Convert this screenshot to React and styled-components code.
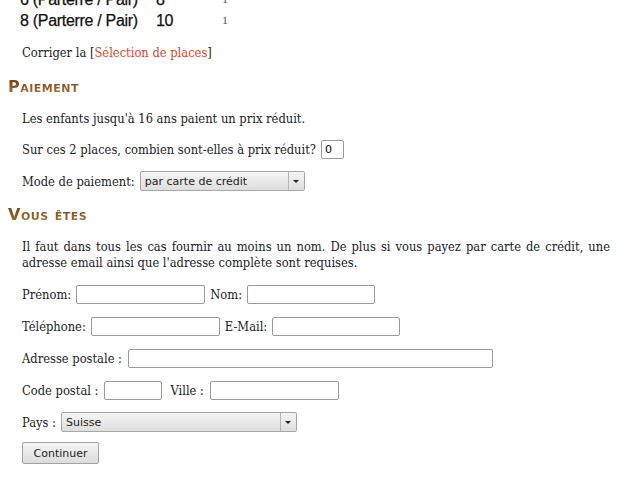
import React from 'react';
import styled, { createGlobalStyle } from 'styled-components';

const Global = createGlobalStyle`
  html, body {
    margin: 0;
    padding: 0;
    background: #fff;
  }
  body {
    font-family: "DejaVu Serif", serif;
    font-stretch: condensed;
    font-size: 12.8px;
    color: #222;
  }
`;

const Page = styled.div`
  width: 620px;
  height: 480px;
  overflow: hidden;
  position: relative;
`;

const Content = styled.div`
  margin-top: -11px;
  padding: 0 8px;
`;

const Seats = styled.table`
  border-collapse: collapse;
  margin-left: 12px;
  td {
    padding: 0;
    height: 21px;
    font-family: "Liberation Sans", Arial, sans-serif;
    font-stretch: normal;
    font-size: 16px;
    letter-spacing: -0.3px;
    color: #111;
    -webkit-text-stroke: 0.25px #111;
  }
  td.num { padding-left: 18px; width: 65px; }
  td.qty {
    font-family: "DejaVu Serif", serif;
    font-size: 10px;
    letter-spacing: 0;
    color: #555;
    -webkit-text-stroke: 0;
    padding-left: 1px;
  }
`;

const Para = styled.p`
  margin: ${p => p.$gap || '0'} 0 0 14px;
  line-height: 16px;
  text-align: ${p => (p.$justify ? 'justify' : 'left')};
  padding-right: ${p => (p.$justify ? '2px' : '0')};
`;

const Link = styled.a`
  color: #d2492a;
  text-decoration: none;
`;

const Heading = styled.h2`
  margin: ${p => p.$gap} 0 0 0;
  font-family: "DejaVu Sans", sans-serif;
  font-stretch: normal;
  font-variant: small-caps;
  font-size: 16px;
  font-weight: bold;
  line-height: 20px;
  letter-spacing: 0.5px;
  color: #8a4a14;
  background: linear-gradient(#6e3a0c, #b27a3e);
  -webkit-background-clip: text;
  background-clip: text;
  -webkit-text-fill-color: transparent;
`;

const Row = styled.div`
  display: flex;
  align-items: center;
  gap: ${p => p.$gap || '5px'};
  margin: ${p => p.$top || '12px'} 0 0 14px;
  height: 20px;
`;

const Label = styled.label`
  white-space: nowrap;
  margin-left: ${p => p.$offset || '0'};
`;

const Field = styled.input`
  box-sizing: border-box;
  width: ${p => p.$w}px;
  height: 19px;
  border: 1px solid #9a9a9a;
  border-radius: 2px;
  padding: 0 3px;
  font-family: "DejaVu Sans", sans-serif;
  font-size: 11px;
  background: #fff;
  outline: none;
`;

const SelectBox = styled.div`
  box-sizing: border-box;
  width: ${p => p.$w}px;
  height: 20px;
  border: 1px solid #a6a6a6;
  border-radius: 2px;
  background: linear-gradient(#f4f4f4, #dedede);
  display: flex;
  align-items: stretch;
  font-family: "DejaVu Sans", sans-serif;
  font-stretch: normal;
  font-size: 11px;
  color: #222;
`;

const SelectText = styled.span`
  flex: 1;
  padding-left: 4px;
  display: flex;
  align-items: center;
`;

const Arrow = styled.span`
  width: 15px;
  border-left: 1px solid #b4b4b4;
  display: flex;
  align-items: center;
  justify-content: center;
  &::after {
    content: '';
    border-left: 3px solid transparent;
    border-right: 3px solid transparent;
    border-top: 3px solid #222;
  }
`;

const Button = styled.button`
  box-sizing: border-box;
  margin: 10px 0 0 14px;
  width: 77px;
  height: 22px;
  border: 1px solid #a2a2a2;
  border-radius: 2px;
  background: linear-gradient(#f6f6f6, #dcdcdc);
  font-family: "DejaVu Sans", sans-serif;
  font-size: 11px;
  color: #222;
  padding: 0;
`;

const Select = ({ w, value }) => (
  <SelectBox $w={w}>
    <SelectText>{value}</SelectText>
    <Arrow />
  </SelectBox>
);

export default function App() {
  return (
    <Page>
      <Global />
      <Content>
        <Seats>
          <tbody>
            <tr><td>6 (Parterre / Pair)</td><td className="num">8</td><td className="qty">1</td></tr>
            <tr><td>8 (Parterre / Pair)</td><td className="num">10</td><td className="qty">1</td></tr>
          </tbody>
        </Seats>

        <Para $gap="14px">Corriger la [<Link href="#">Sélection de places</Link>]</Para>

        <Heading $gap="16px">Paiement</Heading>
        <Para $gap="14px">Les enfants jusqu'à 16 ans paient un prix réduit.</Para>
        <Row $top="12px">
          <Label>Sur ces 2 places, combien sont-elles à prix réduit?</Label>
          <Field $w={23} defaultValue="0" />
        </Row>
        <Row $top="12px">
          <Label>Mode de paiement:</Label>
          <Select w={165} value="par carte de crédit" />
        </Row>

        <Heading $gap="14px">Vous êtes</Heading>
        <Para $gap="14px" $justify>
          Il faut dans tous les cas fournir au moins un nom. De plus si vous payez par carte de crédit, une adresse email ainsi que l'adresse complète sont requises.
        </Para>

        <Row $top="13px">
          <Label>Prénom:</Label>
          <Field $w={129} />
          <Label>Nom:</Label>
          <Field $w={128} />
        </Row>
        <Row>
          <Label>Téléphone:</Label>
          <Field $w={129} />
          <Label>E-Mail:</Label>
          <Field $w={128} />
        </Row>
        <Row $gap="6px">
          <Label>Adresse postale :</Label>
          <Field $w={365} />
        </Row>
        <Row $gap="6px">
          <Label>Code postal :</Label>
          <Field $w={58} />
          <Label $offset="2px">Ville :</Label>
          <Field $w={129} />
        </Row>
        <Row $gap="5px">
          <Label>Pays :</Label>
          <Select w={236} value="Suisse" />
        </Row>
        <Button>Continuer</Button>
      </Content>
    </Page>
  );
}
